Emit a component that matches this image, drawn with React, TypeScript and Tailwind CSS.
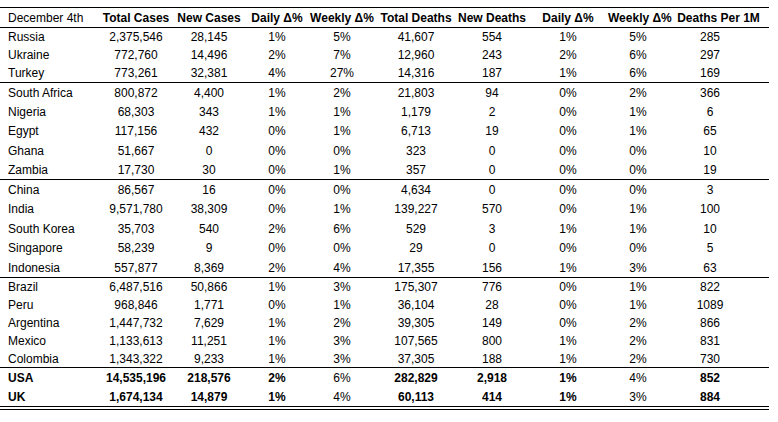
type Row = { name: string; v: string[]; h: number };

const groups: Row[][] = [
  [
    { name: "Russia", v: ["2,375,546", "28,145", "1%", "5%", "41,607", "554", "1%", "5%", "285"], h: 18 },
    { name: "Ukraine", v: ["772,760", "14,496", "2%", "7%", "12,960", "243", "2%", "6%", "297"], h: 18 },
    { name: "Turkey", v: ["773,261", "32,381", "4%", "27%", "14,316", "187", "1%", "6%", "169"], h: 18 },
  ],
  [
    { name: "South Africa", v: ["800,872", "4,400", "1%", "2%", "21,803", "94", "0%", "2%", "366"], h: 19 },
    { name: "Nigeria", v: ["68,303", "343", "1%", "1%", "1,179", "2", "0%", "1%", "6"], h: 19 },
    { name: "Egypt", v: ["117,156", "432", "0%", "1%", "6,713", "19", "0%", "1%", "65"], h: 20 },
    { name: "Ghana", v: ["51,667", "0", "0%", "0%", "323", "0", "0%", "0%", "10"], h: 19 },
    { name: "Zambia", v: ["17,730", "30", "0%", "1%", "357", "0", "0%", "0%", "19"], h: 19 },
  ],
  [
    { name: "China", v: ["86,567", "16", "0%", "0%", "4,634", "0", "0%", "0%", "3"], h: 19 },
    { name: "India", v: ["9,571,780", "38,309", "0%", "1%", "139,227", "570", "0%", "1%", "100"], h: 20 },
    { name: "South Korea", v: ["35,703", "540", "2%", "6%", "529", "3", "1%", "1%", "10"], h: 19 },
    { name: "Singapore", v: ["58,239", "9", "0%", "0%", "29", "0", "0%", "0%", "5"], h: 20 },
    { name: "Indonesia", v: ["557,877", "8,369", "2%", "4%", "17,355", "156", "1%", "3%", "63"], h: 19 },
  ],
  [
    { name: "Brazil", v: ["6,487,516", "50,866", "1%", "3%", "175,307", "776", "0%", "1%", "822"], h: 18 },
    { name: "Peru", v: ["968,846", "1,771", "0%", "1%", "36,104", "28", "0%", "1%", "1089"], h: 18 },
    { name: "Argentina", v: ["1,447,732", "7,629", "1%", "2%", "39,305", "149", "0%", "2%", "866"], h: 18 },
    { name: "Mexico", v: ["1,133,613", "11,251", "1%", "3%", "107,565", "800", "1%", "2%", "831"], h: 18 },
    { name: "Colombia", v: ["1,343,322", "9,233", "1%", "3%", "37,305", "188", "1%", "2%", "730"], h: 17 },
  ],
];

const totals: Row[] = [
  { name: "USA", v: ["14,535,196", "218,576", "2%", "6%", "282,829", "2,918", "1%", "4%", "852"], h: 19 },
  { name: "UK", v: ["1,674,134", "14,879", "1%", "4%", "60,113", "414", "1%", "3%", "884"], h: 19 },
];

// weekly columns stay regular weight in the total rows
const boldCols = [true, true, true, false, true, true, true, false, true];

const headers = ["Total Cases", "New Cases", "Daily Δ%", "Weekly Δ%", "Total Deaths", "New Deaths", "Daily Δ%", "Weekly Δ%"];

const grid = "grid grid-cols-[100px_72px_74px_62px_68px_80px_72px_80px_60px_101px] items-center";

function DataRow({ row, bold }: { row: Row; bold?: boolean }) {
  return (
    <div className={grid} style={{ height: row.h }}>
      <div className={`pl-2 ${bold ? "font-bold" : ""}`}>{row.name}</div>
      {row.v.map((val, i) => (
        <div
          key={i}
          className={`text-center ${i === 8 ? "pr-[17px]" : ""} ${bold && boldCols[i] ? "font-bold" : ""}`}
        >
          {val}
        </div>
      ))}
    </div>
  );
}

export default function App() {
  return (
    <div className="w-[778px] h-[422px] bg-white pt-[7px] font-['Liberation_Sans',Arial,sans-serif] text-[12px] text-black leading-none">
      <div className="w-[769px]">
        <div className="border-t border-b border-black">
          <div className={`${grid} h-[19px]`}>
            <div className="pl-2">December 4th</div>
            {headers.map((h, i) => (
              <div key={i} className="text-center font-bold whitespace-nowrap">
                {h}
              </div>
            ))}
            <div className="text-center font-bold whitespace-nowrap">Deaths Per 1M</div>
          </div>
        </div>

        {groups.map((g, gi) => (
          <div key={gi} className="border-b border-black">
            {g.map((r) => (
              <DataRow key={r.name} row={r} />
            ))}
          </div>
        ))}

        <div>
          {totals.map((r) => (
            <DataRow key={r.name} row={r} bold />
          ))}
        </div>
        <div className="h-px bg-black" />
        <div className="h-[2px]" />
        <div className="h-px bg-black" />
      </div>
    </div>
  );
}
